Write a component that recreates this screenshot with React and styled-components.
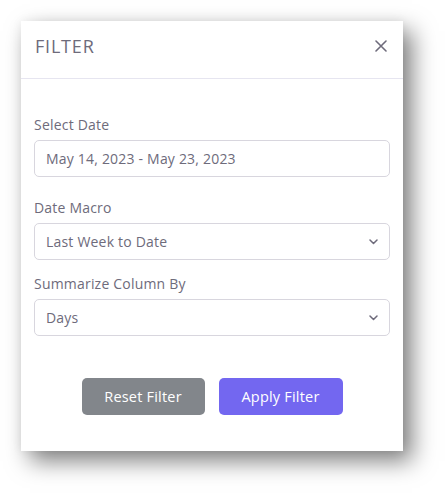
import React from 'react'
import styled, { createGlobalStyle } from 'styled-components'

const GlobalStyle = createGlobalStyle`
  body {
    margin: 0;
    background: #fff;
    font-family: 'Open Sans', 'Liberation Sans', sans-serif;
  }
`

const Page = styled.div`
  padding: 21px 0 0 21px;
  height: 493px;
  box-sizing: border-box;
`

const Card = styled.div`
  width: 382px;
  height: 430px;
  background: #fff;
  box-shadow: 9px 10px 22px rgba(0, 0, 0, 0.5), 0 0 10px rgba(0, 0, 0, 0.06);
  display: flex;
  flex-direction: column;
`

const Header = styled.div`
  height: 58px;
  box-sizing: border-box;
  display: flex;
  align-items: center;
  justify-content: space-between;
  padding: 0 16px 8px 14px;
  border-bottom: 1px solid #e6e5f0;
`

const Title = styled.h4`
  margin: 0;
  font-size: 18px;
  font-weight: 400;
  letter-spacing: 0.8px;
  color: #6e6b7b;
`

const Close = styled.button`
  border: 0;
  background: none;
  padding: 0;
  width: 12px;
  height: 12px;
  display: flex;
  cursor: pointer;
`

const Body = styled.div`
  padding: 36px 13px 0;
  display: flex;
  flex-direction: column;
  letter-spacing: 0.2px;
`

const Field = styled.div`
  display: flex;
  flex-direction: column;
  margin-bottom: ${p => p.gap}px;
`

const Label = styled.label`
  font-size: 14px;
  line-height: 20px;
  color: #6e6b7b;
  margin-bottom: 5px;
`

const Box = styled.div`
  height: 37px;
  box-sizing: border-box;
  border: 1px solid #d8d6de;
  border-radius: 5px;
  display: flex;
  align-items: center;
  justify-content: space-between;
  padding: 0 11px 0 11px;
  font-size: 14px;
  color: #6e6b7b;
`

const Buttons = styled.div`
  display: flex;
  justify-content: center;
  gap: 14px;
  margin-top: 42px;
`

const Button = styled.button`
  width: ${p => p.w}px;
  height: 37px;
  border: 0;
  border-radius: 5px;
  background: ${p => p.bg};
  color: #fff;
  font-family: inherit;
  font-size: 14.5px;
  font-weight: 500;
  letter-spacing: 0.2px;
  cursor: pointer;
`

const Chevron = () => (
  <svg width="9" height="6" viewBox="0 0 9 6" fill="none">
    <path d="M1 1l3.5 3.5L8 1" stroke="#6e6b7b" strokeWidth="1.5" strokeLinecap="round" strokeLinejoin="round" />
  </svg>
)

export default function App() {
  return (
    <Page>
      <GlobalStyle />
      <Card>
        <Header>
          <Title>FILTER</Title>
          <Close aria-label="close">
            <svg width="12" height="12" viewBox="0 0 12 12">
              <path d="M1 1l10 10M11 1L1 11" stroke="#6e6b7b" strokeWidth="1.6" strokeLinecap="round" />
            </svg>
          </Close>
        </Header>
        <Body>
          <Field gap={21}>
            <Label>Select Date</Label>
            <Box>May 14, 2023 - May 23, 2023</Box>
          </Field>
          <Field gap={14}>
            <Label>Date Macro</Label>
            <Box>
              Last Week to Date
              <Chevron />
            </Box>
          </Field>
          <Field gap={0}>
            <Label>Summarize Column By</Label>
            <Box>
              Days
              <Chevron />
            </Box>
          </Field>
          <Buttons>
            <Button bg="#82868b" w={123}>Reset Filter</Button>
            <Button bg="#7367f0" w={124}>Apply Filter</Button>
          </Buttons>
        </Body>
      </Card>
    </Page>
  )
}
